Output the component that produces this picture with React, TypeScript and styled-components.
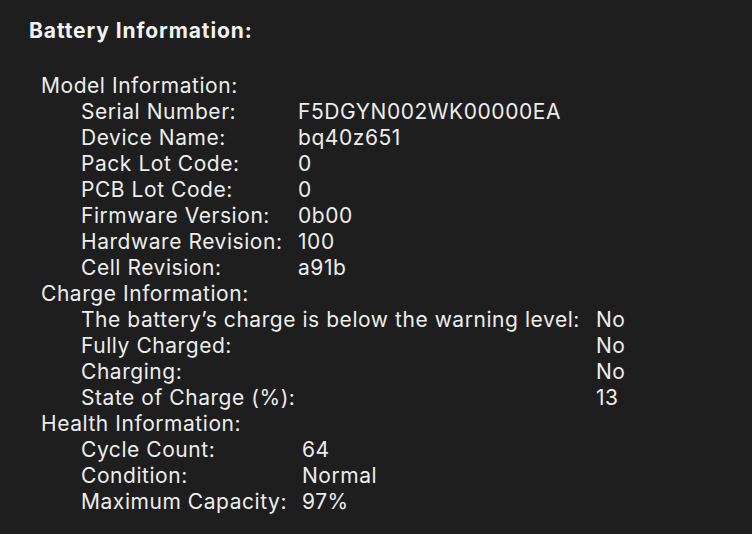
import { Fragment } from "react";
import styled, { createGlobalStyle } from "styled-components";

// ---------------------------- styles ----------------------------
const GlobalStyle = createGlobalStyle`
  html, body {
    margin: 0;
    padding: 0;
    background: #1e1e1e;
  }
  body {
    font-family: Inter, "Liberation Sans", sans-serif;
    color: #ededed;
    -webkit-font-smoothing: antialiased;
  }
`;

const Panel = styled.div`
  width: 752px;
  height: 534px;
  box-sizing: border-box;
  padding: 18px 0 0 29px;
  background: #1e1e1e;
  overflow: hidden;
`;

const Title = styled.h1`
  margin: 0 0 29px;
  font-size: 21px;
  line-height: 26px;
  font-weight: 700;
  letter-spacing: 0.9px;
  color: #f2f2f2;
`;

const Sections = styled.div`
  display: flex;
  flex-direction: column;
  padding-left: 12px;
  font-size: 21px;
  line-height: 26px;
  letter-spacing: 0.55px;
  white-space: nowrap;
`;

const SectionTitle = styled.div``;

const Rows = styled.div<{ $labelWidth: number }>`
  display: grid;
  grid-template-columns: ${(p) => p.$labelWidth}px 1fr;
  padding-left: 40px;
`;

const Label = styled.span``;
const Value = styled.span``;

// ---------------------------- data ----------------------------
type Section = {
  title: string;
  labelWidth: number;
  rows: [string, string][];
};

const sections: Section[] = [
  {
    title: "Model Information:",
    labelWidth: 217,
    rows: [
      ["Serial Number:", "F5DGYN002WK00000EA"],
      ["Device Name:", "bq40z651"],
      ["Pack Lot Code:", "0"],
      ["PCB Lot Code:", "0"],
      ["Firmware Version:", "0b00"],
      ["Hardware Revision:", "100"],
      ["Cell Revision:", "a91b"],
    ],
  },
  {
    title: "Charge Information:",
    labelWidth: 515,
    rows: [
      ["The battery\u2019s charge is below the warning level:", "No"],
      ["Fully Charged:", "No"],
      ["Charging:", "No"],
      ["State of Charge (%):", "13"],
    ],
  },
  {
    title: "Health Information:",
    labelWidth: 221,
    rows: [
      ["Cycle Count:", "64"],
      ["Condition:", "Normal"],
      ["Maximum Capacity:", "97%"],
    ],
  },
];

const App = () => {
  return (
    <>
      <GlobalStyle />
      <Panel>
        <Title>Battery Information:</Title>
        <Sections>
          {sections.map((s) => (
            <div key={s.title}>
              <SectionTitle>{s.title}</SectionTitle>
              <Rows $labelWidth={s.labelWidth}>
                {s.rows.map(([label, value]) => (
                  <Fragment key={label}>
                    <Label>{label}</Label>
                    <Value>{value}</Value>
                  </Fragment>
                ))}
              </Rows>
            </div>
          ))}
        </Sections>
      </Panel>
    </>
  );
};
export default App;
